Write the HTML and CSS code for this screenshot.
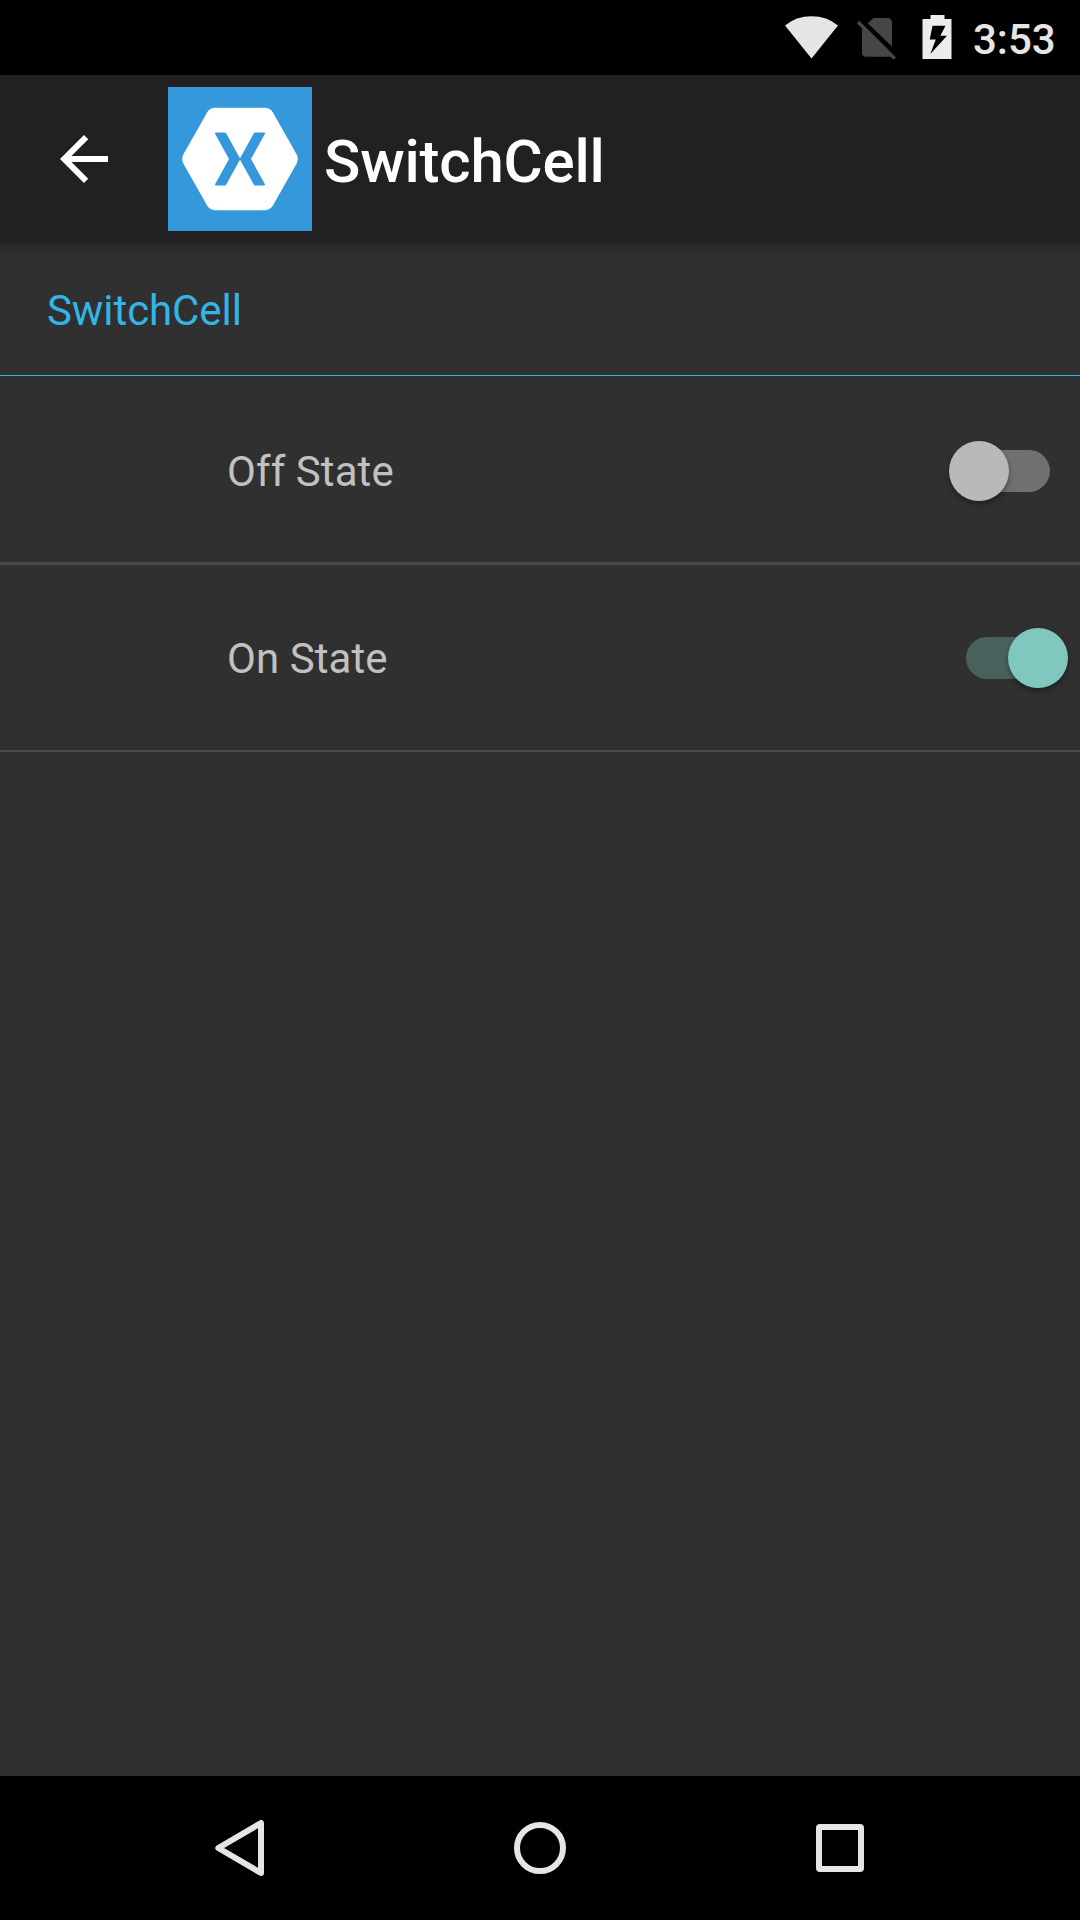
FILE: index.html
```html
<!DOCTYPE html>
<html lang="en">
<head>
<meta charset="utf-8">
<title>SwitchCell</title>
<link rel="stylesheet" href="styles.css">
</head>
<body>
<div class="screen">
  <div class="status-bar">
    <svg class="status-icons" viewBox="0 0 190 75">
      <path fill="#e5e5e5" d="M5 25.5Q16 16.300 31.500 16.300T58 25.500L31.500 58.500Z"/>
      <path fill="#464646" d="M93.500 18H107.500Q112 18 112 22.500V46.500L87.700 23.300Z"/>
      <path fill="#464646" d="M82 26L113.500 56.800H86.500Q82 56.800 82 52.500Z"/>
      <path stroke="#464646" stroke-width="3.600" d="M78 22L114.700 58.500"/>
      <path fill="#ececec" fill-rule="evenodd" d="M150.500 15h14v4h7v40h-29V19h8zM152.500 25.700L149.700 39.500H155.800L150.300 54L167 35.700H160.300L165.500 25.700Z"/>
    </svg>
    <span class="clock">3:53</span>
  </div>
  <header class="toolbar">
    <svg class="back" viewBox="0 0 24 24"><path fill="#fff" d="M20 11H7.830l5.590-5.590L12 4l-8 8 8 8 1.410-1.410L7.830 13H20v-2z"/></svg>
    <svg class="logo" viewBox="0 0 144 144">
      <rect width="144" height="144" fill="#3498db"/>
      <path fill="#fff" d="M47 20.800H97Q102 21 104.600 25L128.700 67.500Q130.900 72 128.700 76.500L104.600 119Q102 123 97 123.200H47Q42 123 39.400 119L15.300 76.500Q13.100 72 15.300 67.500L39.400 25Q42 21 47 20.800Z"/>
      <path fill="#3498db" d="M48 45.400H57.200L58 45.900L71.500 70.500L72 71.300L72.500 70.500L86 45.900L86.800 45.400H96Q97.400 45.600 96.800 47L83 72L96.800 97Q97.400 98.400 96 98.600H86.800L86 98.100L72.500 73.500L72 72.700L71.500 73.500L58 98.100L57.200 98.600H48Q46.600 98.400 47.200 97L61 72L47.200 47Q46.600 45.600 48 45.400Z"/>
    </svg>
    <h1 class="title">SwitchCell</h1>
  </header>
  <main class="content">
    <h2 class="section">SwitchCell</h2>
    <div class="row row-off">
      <span class="label">Off State</span>
      <span class="switch"><span class="thumb"></span></span>
    </div>
    <div class="row row-on">
      <span class="label">On State</span>
      <span class="switch on"><span class="thumb"></span></span>
    </div>
  </main>
  <nav class="nav-bar">
    <svg viewBox="0 0 72 72"><path d="M57 11V61L14.300 36Z"/></svg>
    <svg viewBox="0 0 72 72"><circle cx="36" cy="36" r="23"/></svg>
    <svg viewBox="0 0 72 72"><rect x="15" y="15" width="42" height="42" rx="1"/></svg>
  </nav>
</div>
</body>
</html>
```
FILE: styles.css
```css
* { box-sizing: border-box; margin: 0; }

body {
  background: #303030;
  font-family: Roboto, sans-serif;
}

.screen {
  width: 1080px;
  height: 1920px;
  display: flex;
  flex-direction: column;
  overflow: hidden;
}

.status-bar {
  height: 75px;
  background: #000;
  display: flex;
  align-items: center;
  justify-content: flex-end;
  padding-right: 24px;
}

.status-icons { width: 190px; height: 75px; margin-right: 2px; }

.clock {
  width: 84px;
  color: #e5e5e5;
  font-size: 42px;
  font-weight: 500;
  line-height: 50px;
  padding: 4px 0 0 1px;
}

.toolbar {
  height: 168px;
  background: #212121;
  display: flex;
  align-items: center;
  padding-left: 48px;
}

.back { width: 72px; height: 72px; }
.logo { width: 144px; height: 144px; margin: 0 12px 0 48px; }

.title {
  color: #fff;
  font-size: 60px;
  font-weight: 500;
  line-height: 70px;
  letter-spacing: -0.200px;
  padding-top: 6px;
}

.content {
  flex: 1;
  background: linear-gradient(#262626, #2d2d2d 8px, #303030 15px);
}

.section {
  height: 133px;
  border-bottom: 1px solid #33b5e5;
  padding: 43px 0 0 47px;
  color: #33b5e5;
  font-size: 42px;
  font-weight: 400;
  line-height: 50px;
  letter-spacing: -0.080px;
}

.row {
  display: flex;
  align-items: center;
  justify-content: space-between;
  padding: 4px 30px 0 227px;
}

.row-off { height: 189px; border-bottom: 3px solid #4a4a4a; }
.row-on { height: 187px; border-bottom: 2px solid #4a4a4a; padding-top: 1px; }

.label {
  color: #c1c1c1;
  font-size: 42px;
  line-height: 50px;
  letter-spacing: 0.080px;
  padding-top: 2px;
}

.switch {
  width: 84px;
  height: 42px;
  border-radius: 21px;
  background: #707070;
  display: flex;
  align-items: center;
}

.thumb {
  flex: none;
  width: 60px;
  height: 60px;
  margin: -1px 0 0 -17.500px;
  border-radius: 50%;
  background: #b9b9b9;
  box-shadow: 0 3px 5px rgba(0, 0, 0, 0.35);
}

.on { background: #4a605d; justify-content: flex-end; }
.on .thumb { margin: -1px -17.500px 0 0; background: #80c7c0; }

.nav-bar {
  height: 144px;
  background: #000;
  display: grid;
  grid-template-columns: repeat(3, 300px);
  place-content: center;
  justify-items: center;
}

.nav-bar svg {
  width: 72px;
  height: 72px;
  fill: none;
  stroke: #e5e5e5;
  stroke-width: 6;
  stroke-linejoin: round;
}
```
